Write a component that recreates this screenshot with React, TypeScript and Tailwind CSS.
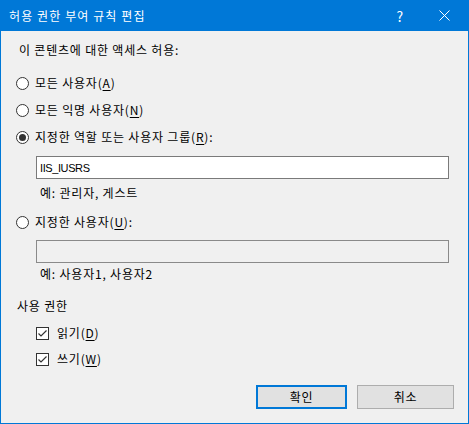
import React from "react";

function Radio({ checked }: { checked?: boolean }) {
  return (
    <span className="w-[13px] h-[13px] rounded-full border border-[#333333] bg-white flex items-center justify-center shrink-0">
      {checked && <span className="w-[7px] h-[7px] rounded-full bg-[#333333]" />}
    </span>
  );
}

function Check() {
  return (
    <span className="w-[13px] h-[13px] border border-[#333333] bg-white flex items-center justify-center shrink-0">
      <svg width="11" height="11" viewBox="0 0 11 11">
        <path d="M1.5 5.5 L4 8 L9.5 2.5" fill="none" stroke="#333333" strokeWidth="1.2" />
      </svg>
    </span>
  );
}

function Key({ k }: { k: string }) {
  return (
    <>
      (<span className="underline underline-offset-2">{k}</span>)
    </>
  );
}

export default function App() {
  return (
    <div className="w-[469px] h-[424px] flex flex-col bg-[#0078d7] font-['Noto_Sans_CJK_KR',sans-serif] text-[12px] leading-4 text-black tracking-[0.8px]">
      <div className="h-[31px] flex items-center shrink-0 text-white">
        <span className="ml-[9px] tracking-[1.1px]">허용 권한 부여 규칙 편집</span>
        <span className="ml-auto mr-[35px] text-[14px]">?</span>
        <svg className="mr-[19px]" width="11" height="11" viewBox="0 0 11 11">
          <path d="M0.5 0.5 L10.5 10.5 M10.5 0.5 L0.5 10.5" stroke="white" strokeWidth="1" />
        </svg>
      </div>
      <div className="flex-1 mx-px mb-px bg-[#f0f0f0] flex flex-col pt-[11px]">
        <div className="ml-[18px] h-4">이 콘텐츠에 대한 액세스 허용:</div>

        <div className="ml-[15px] mt-[17px] h-4 flex items-center gap-[6px]">
          <Radio />
          <span>모든 사용자<Key k="A" /></span>
        </div>
        <div className="ml-[15px] mt-[11px] h-4 flex items-center gap-[6px]">
          <Radio />
          <span>모든 익명 사용자<Key k="N" /></span>
        </div>
        <div className="ml-[15px] mt-[11px] h-4 flex items-center gap-[6px]">
          <Radio checked />
          <span>지정한 역할 또는 사용자 그룹<Key k="R" />:</span>
        </div>

        <div className="ml-[35px] mr-[19px] mt-[11px] h-[23px] border border-[#7a7a7a] bg-white flex items-center px-[3px] font-['Liberation_Sans',sans-serif] text-[11px] tracking-[-0.4px]">
          IIS_IUSRS
        </div>
        <div className="ml-[39px] mt-[6px] h-4">예: 관리자, 게스트</div>

        <div className="ml-[15px] mt-[13px] h-4 flex items-center gap-[6px]">
          <Radio />
          <span>지정한 사용자<Key k="U" />:</span>
        </div>
        <div className="ml-[35px] mr-[19px] mt-[10px] h-[23px] border border-[#8a8a8a] bg-[#f0f0f0]" />
        <div className="ml-[39px] mt-[3px] h-4">예: 사용자1, 사용자2</div>

        <div className="ml-[16px] mt-[16px] h-4">사용 권한</div>
        <div className="ml-[35px] mt-[11px] h-4 flex items-center gap-[8px]">
          <Check />
          <span>읽기<Key k="D" /></span>
        </div>
        <div className="ml-[35px] mt-[10px] h-4 flex items-center gap-[8px]">
          <Check />
          <span>쓰기<Key k="W" /></span>
        </div>

        <div className="mt-[18px] flex justify-end gap-[10px] mr-[14px]">
          <button className="w-[91px] h-[24px] border-2 border-[#0078d7] bg-[#e1e1e1]">확인</button>
          <button className="w-[97px] h-[24px] border border-[#adadad] bg-[#e1e1e1]">취소</button>
        </div>
      </div>
    </div>
  );
}
